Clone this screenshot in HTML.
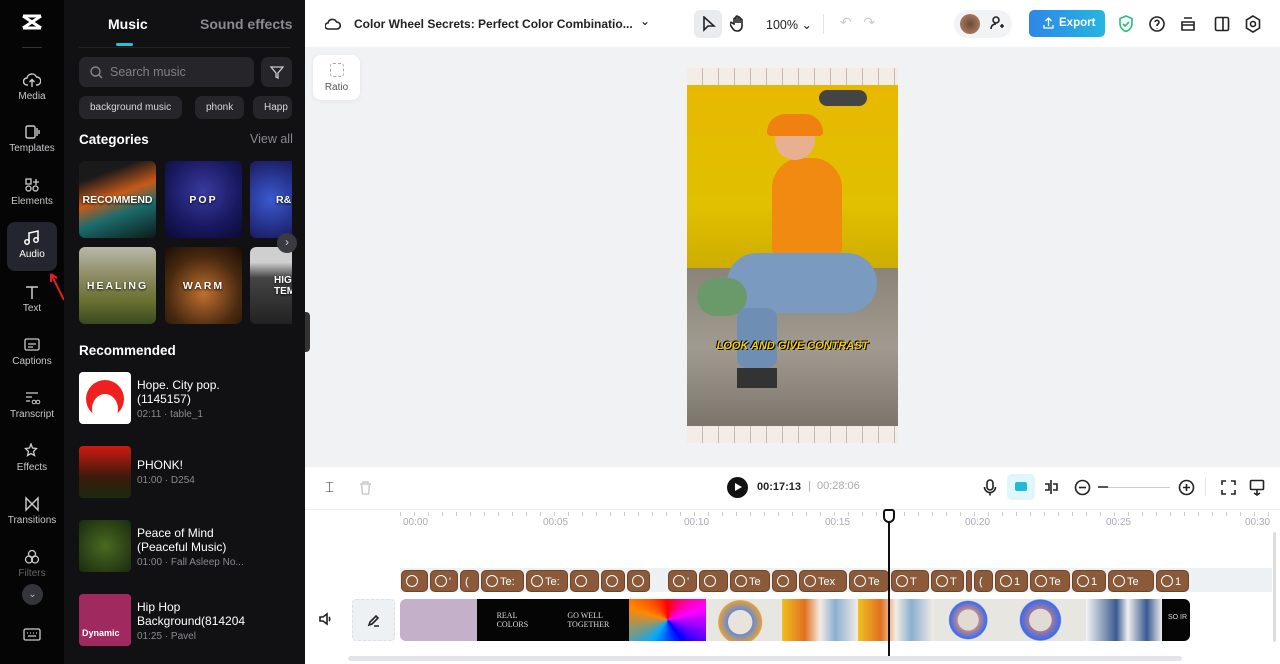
<!DOCTYPE html>
<html><head><meta charset="utf-8"><style>
*{box-sizing:border-box;margin:0;padding:0}
body{width:1280px;height:664px;overflow:hidden;font-family:"Liberation Sans",sans-serif;background:#f1f2f4;position:relative}
.abs{position:absolute}
#rail{left:0;top:0;width:64px;height:664px;background:#050506}
.ri{position:absolute;left:0;width:64px;text-align:center;color:#c8c8cc;font-size:10px}
.ri svg{display:block;margin:0 auto 3px}
#panel{left:64px;top:0;width:241px;height:664px;background:#111113;color:#fff}
.chip{position:absolute;top:96px;height:23px;border-radius:7px;background:#26262a;color:#d8d8dc;font-size:10px;line-height:23px;padding:0 11px;white-space:nowrap}
.cat{position:absolute;width:77px;height:77px;border-radius:6px;overflow:hidden;color:#fff;font-weight:bold;font-size:10.5px;display:flex;align-items:center;justify-content:center;letter-spacing:0;text-shadow:0 1px 2px #000}
.rec{position:absolute;left:15px;width:220px}
.rec .th{position:absolute;left:0;top:0;width:52px;height:52px;border-radius:4px;overflow:hidden}
.rec .t{position:absolute;left:58px;top:6px;font-size:12px;line-height:14px;color:#fff;white-space:nowrap}
.rec .s{font-size:10px;color:#8a8a90;margin-top:2px}
#top{left:305px;top:0;width:975px;height:47px;background:#fff}
.ic{position:absolute;stroke:#222;fill:none;stroke-width:1.6}
#tl{left:305px;top:467px;width:975px;height:197px;background:#fff}
.clip{position:absolute;top:570px;height:22px;background:#8a5a3a;border-radius:5px;color:#fff;font-size:11px;line-height:22px;padding-left:4px;overflow:hidden;white-space:nowrap;border:1px solid #6e4428}
.clip i{display:inline-block;width:12px;height:12px;border:1.5px solid #fff;border-radius:50%;vertical-align:-2px;margin-right:2px}
.tk{position:absolute;top:517px;font-size:10px;color:#aab}
</style></head><body>

<div id="rail" class="abs">
 <svg class="abs" style="left:20px;top:13px" width="24" height="18" viewBox="0 0 24 18"><path d="M3 3 L21 15 M21 3 L3 15 M3 3 h18 M3 15 h18" stroke="#fff" stroke-width="3" fill="none"/></svg>
 <div class="abs" style="left:22px;top:47px;width:20px;height:1px;background:#333"></div>
 <div class="ri" style="top:72px"><svg width="18" height="16" viewBox="0 0 18 16"><path d="M5 13H4a3.5 3.5 0 0 1 0-7 5 5 0 0 1 9.5-1A3.5 3.5 0 0 1 14 13h-1M9 8v7M6.5 10L9 7.5 11.5 10" stroke="#ccc" stroke-width="1.4" fill="none"/></svg>Media</div>
 <div class="ri" style="top:124px"><svg width="18" height="16" viewBox="0 0 18 16"><rect x="3" y="2" width="9" height="12" rx="1.5" stroke="#ccc" stroke-width="1.4" fill="none"/><path d="M14 4v8M16 6v4" stroke="#ccc" stroke-width="1.4"/></svg>Templates</div>
 <div class="ri" style="top:177px"><svg width="18" height="16" viewBox="0 0 18 16"><rect x="3" y="2" width="5" height="5" stroke="#ccc" stroke-width="1.3" fill="none"/><path d="M13 2v6M10 5h6" stroke="#ccc" stroke-width="1.3"/><circle cx="5.5" cy="11.5" r="2.5" stroke="#ccc" stroke-width="1.3" fill="none"/><circle cx="12.5" cy="11.5" r="2.5" stroke="#ccc" stroke-width="1.3" fill="none"/></svg>Elements</div>
 <div class="abs" style="left:7px;top:222px;width:50px;height:49px;border-radius:8px;background:#23262e"></div>
 <div class="ri" style="top:230px;color:#fff"><svg width="18" height="16" viewBox="0 0 18 16"><path d="M6 12V3l9-2v9" stroke="#fff" stroke-width="1.5" fill="none"/><circle cx="4" cy="12" r="2.2" stroke="#fff" stroke-width="1.5" fill="none"/><circle cx="13" cy="10" r="2.2" stroke="#fff" stroke-width="1.5" fill="none"/></svg>Audio</div>
 <svg class="abs" style="left:47px;top:270px" width="20" height="32"><path d="M17 30 L4 4 M4 4 L4 12 M4 4 L10 8" stroke="#e02020" stroke-width="2" fill="none"/></svg>
 <div class="ri" style="top:284px"><svg width="18" height="16" viewBox="0 0 18 16"><path d="M3 3h12M9 3v12" stroke="#ccc" stroke-width="1.5"/></svg>Text</div>
 <div class="ri" style="top:337px"><svg width="18" height="16" viewBox="0 0 18 16"><rect x="2" y="2" width="14" height="11" rx="1.5" stroke="#ccc" stroke-width="1.3" fill="none"/><path d="M5 7h8M5 10h5" stroke="#ccc" stroke-width="1.3"/></svg>Captions</div>
 <div class="ri" style="top:390px"><svg width="18" height="16" viewBox="0 0 18 16"><path d="M3 3h12M3 7h6M3 11h4" stroke="#ccc" stroke-width="1.3"/><circle cx="11" cy="12" r="1.8" stroke="#ccc" fill="none"/><circle cx="15" cy="12" r="1.8" stroke="#ccc" fill="none"/></svg>Transcript</div>
 <div class="ri" style="top:443px"><svg width="18" height="16" viewBox="0 0 18 16"><path d="M8 1l1.5 4 4 .5-3 3 1 4-3.5-2-3.5 2 1-4-3-3 4-.5z" stroke="#ccc" stroke-width="1.3" fill="none"/></svg>Effects</div>
 <div class="ri" style="top:496px"><svg width="18" height="16" viewBox="0 0 18 16"><path d="M3 2v12l12-12v12z" stroke="#ccc" stroke-width="1.4" fill="none"/></svg>Transitions</div>
 <div class="ri" style="top:549px;color:#666"><svg width="18" height="16" viewBox="0 0 18 16"><circle cx="9" cy="5" r="3.5" stroke="#ccc" stroke-width="1.3" fill="none"/><circle cx="6" cy="10.5" r="3.5" stroke="#ccc" stroke-width="1.3" fill="none"/><circle cx="12" cy="10.5" r="3.5" stroke="#ccc" stroke-width="1.3" fill="none"/></svg>Filters</div>
 <div class="abs" style="left:22px;top:584px;width:21px;height:21px;border-radius:50%;background:#333538;color:#bbb;font-size:10px;text-align:center;line-height:21px">⌄</div>
 <svg class="abs" style="left:23px;top:628px" width="18" height="14"><rect x="1" y="1" width="16" height="11" rx="1.5" stroke="#ccc" stroke-width="1.3" fill="none"/><path d="M4 5h1M7 5h1M10 5h1M13 5h1M5 8h8" stroke="#ccc" stroke-width="1.3"/></svg>
</div>

<div id="panel" class="abs">
 <div class="abs" style="left:44px;top:16px;font-size:14px;font-weight:bold">Music</div>
 <div class="abs" style="left:52px;top:43px;width:17px;height:3px;border-radius:2px;background:#23c4d8"></div>
 <div class="abs" style="left:136px;top:16px;font-size:14px;font-weight:bold;color:#8a8a90;white-space:nowrap">Sound effects</div>
 <div class="abs" style="left:15px;top:47px;width:211px;height:1px;background:#222"></div>
 <div class="abs" style="left:15px;top:57px;width:175px;height:30px;border-radius:7px;background:#26262a;color:#808086;font-size:12.5px;line-height:30px;padding-left:31px">Search music
  <svg class="abs" style="left:11px;top:9px" width="13" height="13"><circle cx="5.5" cy="5.5" r="4.5" stroke="#888" stroke-width="1.4" fill="none"/><path d="M9 9l3 3" stroke="#888" stroke-width="1.4"/></svg></div>
 <div class="abs" style="left:197px;top:57px;width:31px;height:30px;border-radius:7px;background:#26262a"><svg style="margin:8px" width="15" height="14"><path d="M2 2h12l-5 6v5l-2-1v-4z" stroke="#ccc" stroke-width="1.3" fill="none"/></svg></div>
 <div class="chip" style="left:15px">background music</div>
 <div class="chip" style="left:131px">phonk</div>
 <div class="chip" style="left:189px;width:39px;overflow:hidden">Happ</div>
 <div class="abs" style="left:15px;top:132px;font-size:13.5px;font-weight:bold">Categories</div>
 <div class="abs" style="left:186px;top:132px;font-size:12.5px;color:#8a8a90">View all</div>
 <div class="cat" style="left:15px;top:161px;background:linear-gradient(160deg,#1a1a1a 20%,#c75a1a 45%,#1c6c6c 65%,#0d1a1a)">RECOMMEND</div>
 <div class="cat" style="left:101px;top:161px;letter-spacing:2px;background:radial-gradient(circle at 50% 40%,#3a3aa0,#181860 60%,#0a0a30)">POP</div>
 <div class="cat" style="left:186px;top:161px;width:42px;border-radius:6px 0 0 6px;justify-content:flex-start;padding-left:26px;background:radial-gradient(circle,#3a5ad0,#1a1a60)">R&amp;</div>
 <div class="cat" style="left:15px;top:247px;letter-spacing:2px;background:linear-gradient(180deg,#b8b8a8,#8a8a60 40%,#6a7030 70%,#3a4a20)">HEALING</div>
 <div class="cat" style="left:101px;top:247px;letter-spacing:2px;background:radial-gradient(circle at 50% 60%,#c07030,#4a2a10 60%,#1a0d05)">WARM</div>
 <div class="cat" style="left:186px;top:247px;width:42px;border-radius:6px 0 0 6px;justify-content:flex-start;padding-left:24px;font-size:10px;background:linear-gradient(180deg,#cfcfcf 20%,#444 40%,#222)">HIG<br>TEM</div>
 <div class="abs" style="left:213px;top:233px;width:20px;height:20px;border-radius:50%;background:#3a3b40;color:#ccc;text-align:center;line-height:19px;font-size:12px">›</div>
 <div class="abs" style="left:15px;top:343px;font-size:13.5px;font-weight:bold">Recommended</div>
 <div class="rec" style="top:372px"><div class="th" style="background:#fff"><div style="position:absolute;left:7px;top:8px;width:38px;height:38px;border-radius:50%;background:#f02020"></div><div style="position:absolute;left:13px;top:22px;width:26px;height:30px;border-radius:50%;background:#fff"></div></div><div class="t">Hope. City pop.<br>(1145157)<div class="s">02:11 · table_1</div></div></div>
 <div class="rec" style="top:446px"><div class="th" style="background:linear-gradient(180deg,#d01a10,#3a1a0a 60%,#1a2a10)"></div><div class="t" style="top:12px">PHONK!<div class="s">01:00 · D254</div></div></div>
 <div class="rec" style="top:520px"><div class="th" style="background:radial-gradient(circle,#4a6a20,#1a2a10)"></div><div class="t">Peace of Mind<br>(Peaceful Music)<div class="s">01:00 · Fall Asleep No...</div></div></div>
 <div class="rec" style="top:594px"><div class="th" style="background:#a02a60;color:#fff;font-size:9px;font-weight:bold;padding:34px 0 0 3px">Dynamic</div><div class="t">Hip Hop<br>Background(814204<div class="s">01:25 · Pavel</div></div></div>
</div>
<div class="abs" style="left:305px;top:312px;width:5px;height:40px;background:#333;border-radius:0 4px 4px 0"></div>

<div id="top" class="abs">
 <svg class="ic" style="left:20px;top:17px" width="16" height="14"><path d="M4 12H3a3 3 0 0 1 0-6 4.5 4.5 0 0 1 8.5-1A3 3 0 0 1 12 12z"/></svg>
 <div class="abs" style="left:49px;top:17px;font-size:12px;font-weight:bold;color:#222">Color Wheel Secrets: Perfect Color Combinatio...</div>
 <div class="abs" style="left:335px;top:14px;font-size:12px">⌄</div>
 <div class="abs" style="left:389px;top:10px;width:28px;height:28px;border-radius:6px;background:#e9ebef"></div>
 <svg class="ic" style="left:397px;top:16px" width="14" height="16"><path d="M2 1v13l4-4 6 0z"/></svg>
 <svg class="ic" style="left:425px;top:15px" width="16" height="17"><path d="M4 9V4a1 1 0 0 1 2 0v4V2a1 1 0 0 1 2 0v6V3a1 1 0 0 1 2 0v5V5a1 1 0 0 1 2 0v6c0 3-2 5-5 5s-4-2-6-5l-1-2a1 1 0 0 1 2-1z"/></svg>
 <div class="abs" style="left:461px;top:17px;font-size:12.5px;color:#222">100% ⌄</div>
 <div class="abs" style="left:518px;top:14px;width:1px;height:20px;background:#e4e4e4"></div>
 <div class="abs" style="left:535px;top:14px;color:#ccc;font-size:14px">↶ &nbsp; ↷</div>
 <div class="abs" style="left:649px;top:10px;width:58px;height:28px;border-radius:14px;background:#f2f3f5"></div>
 <div class="abs" style="left:655px;top:14px;width:20px;height:20px;border-radius:50%;background:radial-gradient(circle,#6a4a3a,#c08a6a)"></div>
 <svg class="ic" style="left:685px;top:16px" width="14" height="14" style="stroke-width:1.3"><circle cx="6" cy="4" r="3"/><path d="M1 13c0-3 2-5 5-5M10 10h4M12 8v4"/></svg>
 <div class="abs" style="left:724px;top:10px;width:76px;height:27px;border-radius:5px;background:linear-gradient(90deg,#2f86e8,#23b6e0);color:#fff;font-size:11.5px;font-weight:bold;line-height:27px;padding-left:30px">Export<svg class="abs" style="left:14px;top:7px" width="11" height="12"><path d="M5.5 9V1M2.5 4l3-3 3 3M1 8v3h9V8" stroke="#fff" stroke-width="1.3" fill="none"/></svg></div>
 <svg class="ic" style="left:813px;top:15px;stroke:#22c07a" width="16" height="18"><path d="M8 1l6 2.5v5c0 4-3 7-6 8-3-1-6-4-6-8v-5z M5 9l2 2 4-4"/></svg>
 <svg class="ic" style="left:844px;top:16px" width="16" height="16"><circle cx="8" cy="8" r="7"/><path d="M6 6a2 2 0 1 1 3 2c-1 .5-1 1-1 2M8 12v.5"/></svg>
 <svg class="ic" style="left:875px;top:16px" width="16" height="16"><path d="M4 2h8M2 6h12v3H2zM2 9v5h12V9"/></svg>
 <svg class="ic" style="left:909px;top:16px" width="16" height="16"><rect x="1.5" y="1.5" width="13" height="13" rx="1.5"/><path d="M9 2v12"/></svg>
 <svg class="ic" style="left:940px;top:15px" width="16" height="18"><path d="M8 1l6.5 4v8L8 17 1.5 13V5z"/><circle cx="8" cy="9" r="2.5"/></svg>
</div>

<div class="abs" style="left:313px;top:55px;width:47px;height:45px;border-radius:8px;background:#fff;box-shadow:0 1px 4px rgba(0,0,0,.06);text-align:center;font-size:10px;color:#555"><div style="width:14px;height:14px;border:1.3px dashed #aaa;border-radius:3px;margin:8px auto 5px"></div>Ratio</div>

<div class="abs" style="left:687px;top:68px;width:211px;height:375px;background:#efe6df;overflow:hidden">
 <div class="abs" style="left:0;top:0;width:211px;height:17px;background:repeating-linear-gradient(90deg,#f4ece6 0 15px,#c8b8b0 15px 16px)"></div>
 <div class="abs" style="left:0;top:17px;width:211px;height:200px;background:linear-gradient(180deg,#e8b800,#e0c000 60%,#c8a800)"></div>
 <div class="abs" style="left:132px;top:22px;width:48px;height:16px;border-radius:8px;background:#444"></div>
 <div class="abs" style="left:0;top:200px;width:211px;height:160px;background:linear-gradient(180deg,#8a8478,#a09a90 50%,#7a746a)"></div>
 <div class="abs" style="left:85px;top:90px;width:70px;height:100px;border-radius:30px 30px 10px 10px;background:#f08a10"></div>
 <div class="abs" style="left:88px;top:52px;width:40px;height:40px;border-radius:50%;background:#e8b090"></div>
 <div class="abs" style="left:80px;top:46px;width:56px;height:22px;border-radius:20px 20px 4px 4px;background:#f08010"></div>
 <div class="abs" style="left:40px;top:185px;width:150px;height:60px;border-radius:30px;background:#7a9ac0"></div>
 <div class="abs" style="left:10px;top:210px;width:50px;height:38px;border-radius:20px;background:#6a9a6a"></div>
 <div class="abs" style="left:50px;top:240px;width:40px;height:60px;border-radius:10px;background:#6e8eb4"></div>
 <div class="abs" style="left:50px;top:300px;width:40px;height:20px;background:#333"></div>
 <div class="abs" style="left:0;top:272px;width:211px;text-align:center;font-size:11px;font-weight:bold;font-style:italic;color:#f8d000;text-shadow:1px 1px 0 #000,-1px -1px 0 #000">LOOK AND GIVE CONTRAST</div>
 <div class="abs" style="left:0;top:358px;width:211px;height:17px;background:repeating-linear-gradient(90deg,#f4ece6 0 15px,#c8b8b0 15px 16px)"></div>
</div>

<div id="tl" class="abs"></div>
<div class="abs" style="left:305px;top:509px;width:975px;height:1px;background:#eee"></div>
<div class="abs" style="left:325px;top:479px;font-size:15px;color:#333">⌶</div>
<svg class="ic" style="left:359px;top:481px;stroke:#ccc" width="13" height="14"><path d="M1 3h11M4 3V1h5v2M2.5 3l1 10h6l1-10"/></svg>
<div class="abs" style="left:727px;top:477px;width:21px;height:21px;border-radius:50%;background:#111"><div style="margin:6px 0 0 8px;width:0;height:0;border-left:7px solid #fff;border-top:4.5px solid transparent;border-bottom:4.5px solid transparent"></div></div>
<div class="abs" style="left:757px;top:481px;font-size:11px;font-weight:bold;color:#222">00:17:13</div>
<div class="abs" style="left:808px;top:480px;font-size:11px;color:#aaa">|&nbsp; 00:28:06</div>
<svg class="ic" style="left:983px;top:479px" width="14" height="18"><rect x="4" y="1" width="6" height="10" rx="3"/><path d="M1.5 8a5.5 5.5 0 0 0 11 0M7 13.5v3"/></svg>
<div class="abs" style="left:1007px;top:474px;width:28px;height:26px;border-radius:5px;background:#dff6fb"><div style="margin:8px 0 0 8px;width:12px;height:9px;background:#23b8d8;border-radius:2px"></div></div>
<svg class="ic" style="left:1043px;top:479px" width="16" height="16"><path d="M8 1v14M2 5h4v6H2M10 5h4v6h-4"/></svg>
<svg class="ic" style="left:1074px;top:479px" width="17" height="17"><circle cx="8.5" cy="8.5" r="7"/><path d="M5 8.5h7"/></svg>
<div class="abs" style="left:1098px;top:487px;width:72px;height:1px;background:#ccc"></div>
<div class="abs" style="left:1098px;top:486px;width:10px;height:2px;background:#555"></div>
<svg class="ic" style="left:1178px;top:479px" width="17" height="17"><circle cx="8.5" cy="8.5" r="7"/><path d="M5 8.5h7M8.5 5v7"/></svg>
<div class="abs" style="left:1205px;top:478px;width:1px;height:18px;background:#e4e4e4"></div>
<svg class="ic" style="left:1221px;top:480px" width="15" height="15"><path d="M1 5V1h4M10 1h4v4M14 10v4h-4M5 14H1v-4"/></svg>
<svg class="ic" style="left:1249px;top:479px" width="16" height="17"><rect x="1.5" y="1.5" width="13" height="9" rx="1"/><path d="M8 11v4M5 14l3 2 3-2"/></svg>

<div class="tk" style="left:403px">00:00</div><div class="tk" style="left:543px">00:05</div><div class="tk" style="left:684px">00:10</div><div class="tk" style="left:825px">00:15</div><div class="tk" style="left:965px">00:20</div><div class="tk" style="left:1106px">00:25</div><div class="tk" style="left:1245px">00:30</div>
<div class="abs" style="left:400px;top:512px;width:880px;height:4px;background:repeating-linear-gradient(90deg,#ccc 0 1px,transparent 1px 14px)"></div>

<div class="abs" style="left:400px;top:568px;width:872px;height:24px;background:#eef1f3"></div>
<div class="clip" style="left:401px;width:27px"><i></i></div>
<div class="clip" style="left:430px;width:28px"><i></i>'</div>
<div class="clip" style="left:460px;width:19px">(</div>
<div class="clip" style="left:481px;width:43px"><i></i>Te:</div>
<div class="clip" style="left:526px;width:42px"><i></i>Te:</div>
<div class="clip" style="left:570px;width:29px"><i></i></div>
<div class="clip" style="left:601px;width:24px"><i></i></div>
<div class="clip" style="left:627px;width:23px"><i></i></div>
<div class="clip" style="left:668px;width:29px"><i></i>'</div>
<div class="clip" style="left:699px;width:29px"><i></i></div>
<div class="clip" style="left:730px;width:40px"><i></i>Te</div>
<div class="clip" style="left:772px;width:25px"><i></i></div>
<div class="clip" style="left:799px;width:48px"><i></i>Tex</div>
<div class="clip" style="left:849px;width:40px"><i></i>Te</div>
<div class="clip" style="left:891px;width:38px"><i></i>T</div>
<div class="clip" style="left:931px;width:33px"><i></i>T</div>
<div class="clip" style="left:966px;width:6px"></div>
<div class="clip" style="left:974px;width:19px">(</div>
<div class="clip" style="left:995px;width:33px"><i></i>1</div>
<div class="clip" style="left:1030px;width:40px"><i></i>Te</div>
<div class="clip" style="left:1072px;width:34px"><i></i>1</div>
<div class="clip" style="left:1108px;width:46px"><i></i>Te</div>
<div class="clip" style="left:1156px;width:33px"><i></i>1</div>

<svg class="ic" style="left:319px;top:612px" width="14" height="14" style="stroke-width:1.3"><path d="M1 5h3l4-3v10L4 9H1zM10 5c1 1 1 3 0 4"/></svg>
<div class="abs" style="left:352px;top:599px;width:43px;height:42px;border-radius:4px;background:#eef1f4;border:1px dashed #dde"></div>
<svg class="ic" style="left:367px;top:614px" width="13" height="13" style="stroke-width:1.3"><path d="M2 11l1-3 6-6 2 2-6 6zM7 12h5"/></svg>
<div class="abs" style="left:400px;top:599px;width:790px;height:42px;border-radius:6px;overflow:hidden;display:flex">
 <div style="width:77px;background:#c4b0c8"></div>
 <div style="width:152px;background:#050505;color:#ddd;font-size:8px;font-family:'Liberation Serif',serif;display:flex;justify-content:space-around;align-items:center">REAL<br>COLORS<span>GO WELL<br>TOGETHER</span></div>
 <div style="width:77px;background:conic-gradient(#f00,#f0f,#00f,#0af,#f80,#f00)"></div>
 <div style="width:76px;background:radial-gradient(circle at 45% 55%,#e8e4dc 25%,#6a8ad0 26%,#e0a040 45%,#e8e6e0 47%)"></div>
 <div style="width:76px;background:linear-gradient(90deg,#f0c020,#e07020 30%,#f4ece4 50%,#8ab0d0 70%,#f4ece4)"></div>
 <div style="width:76px;background:linear-gradient(90deg,#f0c020,#e07020 30%,#f4ece4 50%,#8ab0d0 70%,#f4ece4)"></div>
 <div style="width:76px;background:radial-gradient(circle at 45% 50%,#e0dcd4 22%,#c08a8a 23%,#3a6af0 40%,#e8e6e0 42%)"></div>
 <div style="width:76px;background:radial-gradient(circle at 40% 50%,#e0dcd4 22%,#a07a9a 23%,#3a6af0 40%,#e8e6e0 42%)"></div>
 <div style="width:76px;background:linear-gradient(90deg,#f4f4f4,#3a5a90 40%,#f0f0f0 55%,#3a5a90 80%,#eee)"></div>
 <div style="width:28px;background:#050505;color:#ddd;font-size:7px;padding:15px 0 0 6px">SO IR</div>
</div>
<div class="abs" style="left:888px;top:516px;width:2px;height:140px;background:#111"></div>
<div class="abs" style="left:883px;top:509px;width:12px;height:14px;border:2px solid #111;border-radius:3px 3px 6px 6px;background:#fff"></div>
<div class="abs" style="left:1273px;top:532px;width:3px;height:110px;background:#ddd;border-radius:2px"></div>
<div class="abs" style="left:348px;top:656px;width:834px;height:5px;background:#e2e4e7;border-radius:3px"></div>
</body></html>
